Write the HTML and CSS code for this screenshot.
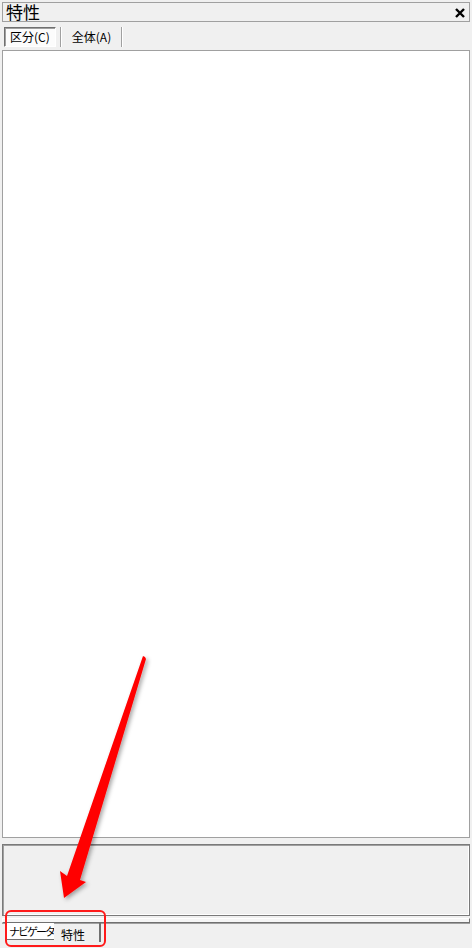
FILE: index.html
```html
<!DOCTYPE html>
<html lang="ja">
<head>
<meta charset="utf-8">
<link rel="stylesheet" href="styles.css">
</head>
<body>
<div class="app">
  <div class="titlebar">
    <span class="title">特性</span>
    <svg class="close" width="10" height="10" viewBox="0 0 10 10"><path d="M1 1L9 9M9 1L1 9" stroke="#000" stroke-width="2.4"/></svg>
  </div>
  <div class="tabs">
    <div class="tab pressed">区分(C)</div>
    <div class="sep"></div>
    <div class="tab">全体(A)</div>
    <div class="sep"></div>
  </div>
  <div class="main"></div>
  <div class="desc"></div>
  <div class="bar"></div>
  <div class="btabs">
    <div class="btab first">ナビゲータ</div>
    <div class="btab active">特性</div>
  </div>
</div>
<div class="highlight"></div>
<svg class="arrow" width="472" height="948" viewBox="0 0 472 948">
  <defs>
    <filter id="sh" x="-50%" y="-50%" width="200%" height="200%">
      <feDropShadow dx="2" dy="2" stdDeviation="2" flood-color="#000" flood-opacity="0.35"/>
    </filter>
  </defs>
  <polygon filter="url(#sh)" fill="#ff0000" points="145,657 146,659 80,880 86,882 64,898 60,871 67,876 143,656"/>
</svg>
</body>
</html>
```
FILE: styles.css
```css
html, body { margin: 0; padding: 0; }
body {
  width: 472px; height: 948px; background: #f0f0f0; position: relative; overflow: hidden;
  font-family: "MS UI Gothic", "Noto Sans CJK JP", sans-serif;
}
.app { display: flex; flex-direction: column; padding: 2px 2px 0 2px; height: 946px; }
.titlebar {
  height: 18px; border: 1px solid #a0a0a0; display: flex; align-items: center;
  justify-content: space-between; padding: 0 4px 0 3px; background: #f0f0f0;
}
.title { font-size: 17px; line-height: 18px; color: #000; }
.close { margin-top: 1px; }
.tabs { display: flex; align-items: center; height: 24px; margin-top: 3px; padding-left: 2px; }
.tab { font-size: 12px; height: 18px; line-height: 18px; padding: 0 5px; color: #000; }
.tab.pressed {
  background: #fcfcfc; border: 1px solid; border-color: #707070 #fff #fff #707070;
  box-shadow: inset 1px 1px 0 #a0a0a0;
}
.tab + .sep { margin-left: 4px; }
.sep { width: 1px; height: 20px; background: #a0a0a0; border-right: 1px solid #fff; margin-right: 4px; }
.tabs .tab:nth-child(3) { padding: 0 6px; }
.main { height: 786px; background: #fff; border: 1px solid #a0a0a0; margin-top: 1px; }
.desc {
  height: 70px; margin-top: 6px; background: #f0f0f0;
  border: 1px solid #7a7a7a; box-shadow: inset 1px 1px 0 #a0a0a0, inset -1px -1px 0 #fff;
}
.bar {
  height: 3px; margin-top: 2px; background: #f6f6f6; border: 1px solid #fff;
  border-bottom-color: #707070; border-right-color: #707070; box-shadow: 0 1px 0 #a0a0a0;
}
.btabs { display: flex; padding-left: 4px; align-items: flex-start; }
.btab { font-size: 12px; height: 17px; line-height: 17px; white-space: nowrap; box-sizing: border-box; }
.btab.first {
  width: 48px; overflow: hidden;
  background: #fff; padding: 0 0 0 2px; border-left: 1px solid #fff;
  border-bottom: 1px solid #707070; font-size: 11px; letter-spacing: -2px;
}
.btab.active {
  width: 47px; padding: 2px 0 0 7px; height: 19px; line-height: 19px;
  border-right: 2px solid #707070;
}
.highlight {
  position: absolute; left: 5px; top: 910px; width: 97px; height: 33px;
  border: 2px solid #ff1a1a; border-radius: 6px;
}
.arrow { position: absolute; left: 0; top: 0; pointer-events: none; }
```
